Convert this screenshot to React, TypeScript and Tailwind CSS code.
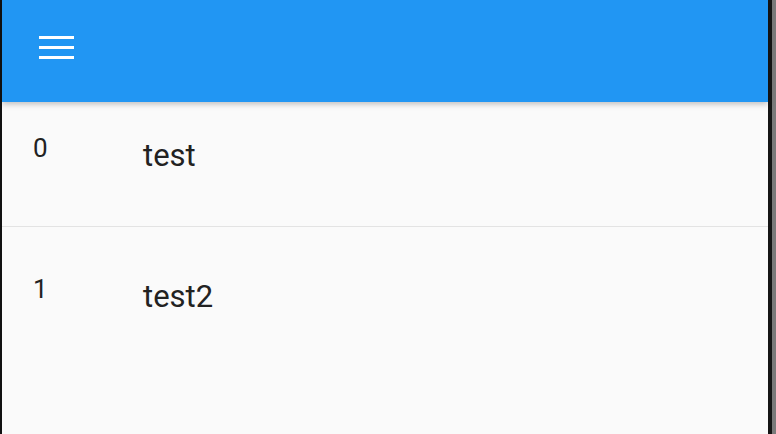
import React from "react";

const ROWS = [
  { id: 0, title: "test" },
  { id: 1, title: "test2" },
];

function Row({ id, title, first }: { id: number; title: string; first?: boolean }) {
  return (
    <div
      className={
        first
          ? "flex items-start h-[125px] pt-[36px] border-b border-[#e3e3e3]"
          : "flex items-start h-[140px] pt-[52px]"
      }
    >
      <span className="w-[141px] pl-[31px] text-[26px] leading-[21px] text-[#222]">{id}</span>
      <span className="text-[31px] leading-[36px] text-[#222]">{title}</span>
    </div>
  );
}

export default function App() {
  return (
    <div
      className="w-[776px] h-[434px] overflow-hidden flex bg-[#111]"
      style={{ fontFamily: "Roboto, 'Noto Sans', sans-serif" }}
    >
      <div className="ml-[2px] w-[766px] h-full flex flex-col bg-[#fafafa]">
        {/* App bar */}
        <div className="relative z-10 h-[102px] shrink-0 bg-[#2196f3] flex items-center pl-[37px] shadow-[0_2px_6px_rgba(0,0,0,0.25)]">
          <div className="flex flex-col gap-[7px] -mt-[7px]">
            <div className="w-[35px] h-[3px] bg-white" />
            <div className="w-[35px] h-[3px] bg-white" />
            <div className="w-[35px] h-[3px] bg-white" />
          </div>
        </div>

        {/* List */}
        <div className="flex flex-col">
          {ROWS.map((r, i) => (
            <Row key={r.id} id={r.id} title={r.title} first={i === 0} />
          ))}
        </div>
      </div>
      <div className="w-[4px] h-full bg-[#151515]" />
      <div className="w-[4px] h-full bg-[#7a7a7a]" />
    </div>
  );
}
